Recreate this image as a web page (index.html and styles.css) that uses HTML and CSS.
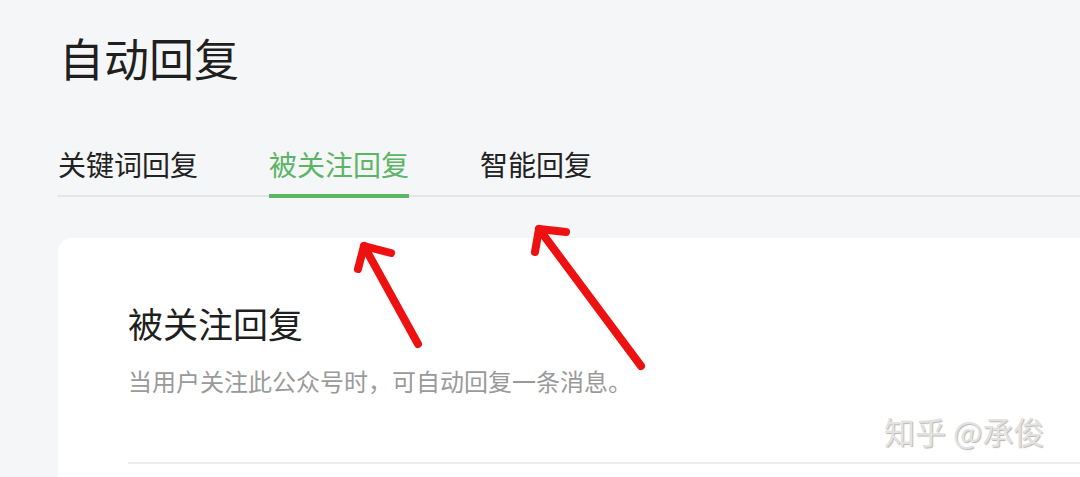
FILE: index.html
```html
<!DOCTYPE html>
<html lang="zh">
<head>
<meta charset="utf-8">
<link rel="stylesheet" href="styles.css">
</head>
<body>
<div class="page">
  <h1 class="title">自动回复</h1>
  <nav class="tabs">
    <div class="tab">关键词回复</div>
    <div class="tab active">被关注回复</div>
    <div class="tab">智能回复</div>
  </nav>
  <section class="card">
    <h2 class="card-title">被关注回复</h2>
    <p class="card-desc">当用户关注此公众号时，可自动回复一条消息。</p>
    <div class="divider"></div>
  </section>
</div>
<svg class="arrows" width="1080" height="477" viewBox="0 0 1080 477">
  <g fill="none" stroke="#ee1111" stroke-width="8" stroke-linecap="round" stroke-linejoin="round">
    <path d="M418 344 L364 246"/>
    <path d="M358 269 L364 246 L391 253"/>
    <path d="M641 366 L539 229"/>
    <path d="M535 252 L539 229 L566 232"/>
  </g>
</svg>
<div class="watermark">知乎 @承俊</div>
</body>
</html>
```

FILE: styles.css
```css
html, body {
  margin: 0;
  padding: 0;
}
body {
  width: 1080px;
  height: 477px;
  overflow: hidden;
  background: #f5f6f7;
  font-family: "Noto Sans CJK SC", "Noto Sans", sans-serif;
  position: relative;
}
.page {
  padding: 0 0 0 58px;
}
.title {
  margin: 0;
  padding: 28px 0 0 1px;
  font-size: 45px;
  font-weight: 400;
  line-height: 60px;
  color: #1f1f1f;
}
.tabs {
  display: flex;
  gap: 71px;
  margin-top: 56px;
  border-bottom: 2px solid #e4e5e7;
}
.tab {
  font-size: 28px;
  line-height: 40px;
  color: #222;
  padding-bottom: 11px;
}
.tab.active {
  color: #5bb565;
  border-bottom: 4px solid #5bb565;
  margin-bottom: -3px;
  padding-bottom: 10px;
}
.card {
  margin-top: 41px;
  background: #fff;
  border-radius: 14px 0 0 0;
  padding: 62px 0 0 70px;
  height: 180px;
}
.card-title {
  margin: 0;
  font-size: 35px;
  font-weight: 400;
  line-height: 46px;
  color: #1f1f1f;
}
.card-desc {
  margin: 19px 0 0;
  font-size: 24px;
  line-height: 32px;
  color: #9a9a9a;
}
.divider {
  margin-top: 65px;
  border-top: 2px solid #ececec;
}
.arrows {
  position: absolute;
  left: 0;
  top: 0;
  pointer-events: none;
}
.watermark {
  position: absolute;
  left: 884px;
  top: 409px;
  font-size: 31px;
  line-height: 44px;
  color: #e2e2e2;
  text-shadow: 1px 1px 1px #b8b8b8;
}
```
